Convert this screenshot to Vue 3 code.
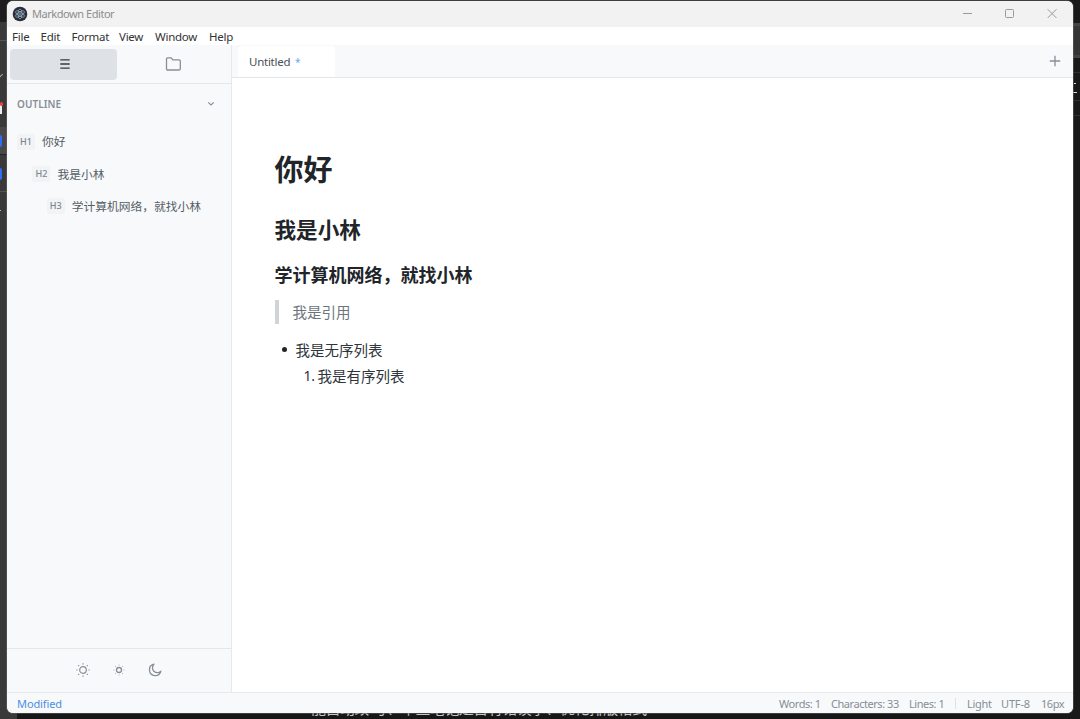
<script setup>
const menus = [
  { label: 'File', w: 28.5 }, { label: 'Edit', w: 31 }, { label: 'Format', w: 47.5 },
  { label: 'View', w: 36 }, { label: 'Window', w: 54 }, { label: 'Help', w: 30 },
]
const outline = [
  { level: 1, text: '你好' },
  { level: 2, text: '我是小林' },
  { level: 3, text: '学计算机网络，就找小林' },
]
const rays = [0, 45, 90, 135, 180, 225, 270, 315]
</script>

<template>
  <div class="desktop">
    <div class="back left">
      <i class="line a"></i><i class="tick"></i><i class="doc"></i><i class="red"></i><i class="selected"></i>
      <i class="blue one"></i><i class="blue two"></i><i class="line b"></i><i class="dash"></i>
    </div>
    <div class="back right"><i class="band"></i><i class="mark m1"></i><i class="mark m2"></i><i class="rule r1"></i><i class="rule r2"></i><i class="rule r3"></i></div>
    <div class="behind">能自动改 写、单三笔记是否有错误字、优化排版格式</div>
    <div class="window">
      <header class="titlebar">
        <svg class="logo" width="16" height="16" viewBox="0 0 16 16" fill="none">
          <circle cx="8" cy="8" r="7.3" fill="#2b2e3a" />
          <g stroke="#8fafbd" stroke-width=".75">
            <ellipse cx="8" cy="8" rx="5" ry="2" transform="rotate(30 8 8)" />
            <ellipse cx="8" cy="8" rx="5" ry="2" transform="rotate(90 8 8)" />
            <ellipse cx="8" cy="8" rx="5" ry="2" transform="rotate(150 8 8)" />
          </g>
          <circle cx="8" cy="8" r=".8" fill="#a6c5d0" />
        </svg>
        <span class="title">Markdown Editor</span>
        <svg class="controls" width="96" height="12" viewBox="0 0 96 12" fill="none" stroke="#9a9a9a">
          <path d="M1 5.5h9" />
          <rect x="43.5" y="1.5" width="8" height="8" rx="1" />
          <path d="m85.7 1.2 8.8 8.8m0-8.8-8.8 8.8" />
        </svg>
      </header>
      <nav class="menu">
        <span v-for="m in menus" :key="m.label" :style="{ width: m.w + 'px' }">{{ m.label }}</span>
      </nav>
      <div class="body">
        <aside>
          <div class="modes">
            <div class="mode active">
              <svg width="12" height="12" viewBox="0 0 12 12" stroke="#343a40" stroke-width="1.3"><path d="M1.3 1.8h9.4M1.3 6h9.4M1.3 10.2h9.4" /></svg>
            </div>
            <div class="mode">
              <svg width="17" height="16" viewBox="0 0 17 16" fill="none" stroke="#868e96" stroke-width="1.3" stroke-linejoin="round"><path d="M2.7 1.8h3.5l1.7 2.1h6.2q1.2 0 1.2 1.2v7.6q0 1.3-1.3 1.3H2.8q-1.3 0-1.3-1.3V3q0-1.2 1.2-1.2Z" /></svg>
            </div>
          </div>
          <div class="outline-head"><span>OUTLINE</span>
            <svg width="8" height="6" viewBox="0 0 8 6" fill="none" stroke="#868e96" stroke-width="1.1"><path d="m1.2 1.3 2.8 2.7 2.8-2.7" /></svg>
          </div>
          <div class="tree">
            <div v-for="o in outline" :key="o.level" class="node" :class="'lv' + o.level">
              <b>H{{ o.level }}</b><span>{{ o.text }}</span>
            </div>
          </div>
          <div class="themes">
            <svg width="16" height="16" viewBox="0 0 16 16" fill="none" stroke="#868e96" stroke-width="1.2">
              <circle cx="8" cy="8" r="3.3" />
              <path v-for="r in rays" :key="r" d="M8 1.3v1.2" :transform="`rotate(${r} 8 8)`" />
            </svg>
            <svg width="16" height="16" viewBox="0 0 16 16" fill="none" stroke="#868e96" stroke-width="1.3">
              <circle cx="8" cy="8" r="2.5" />
              <path v-for="r in rays" :key="r" d="M8 2.5v1" stroke="#adb5bd" stroke-width="1" :transform="`rotate(${r} 8 8)`" />
            </svg>
            <svg width="16" height="16" viewBox="0 0 16 16" fill="none" stroke="#868e96" stroke-width="1.3" stroke-linejoin="round">
              <path d="M6.9 2.2A5.8 5.8 0 1 0 13.9 9.2 4.7 4.7 0 0 1 6.9 2.2Z" />
            </svg>
          </div>
        </aside>
        <main>
          <div class="tabs">
            <div class="tab"><span class="name">Untitled</span><span class="star">*</span></div>
            <svg class="plus" width="12" height="12" viewBox="0 0 12 12" stroke="#868e96" stroke-width="1.3"><path d="M6 .8v10.4M.8 6h10.4" /></svg>
          </div>
          <article>
            <h1>你好</h1>
            <h2>我是小林</h2>
            <h3>学计算机网络，就找小林</h3>
            <blockquote>我是引用</blockquote>
            <div class="item"><i class="bullet"></i>我是无序列表</div>
            <div class="item nested"><span class="num">1.</span>我是有序列表</div>
          </article>
        </main>
      </div>
      <footer>
        <span class="modified">Modified</span>
        <span class="words">Words: 1</span>
        <span class="chars">Characters: 33</span>
        <span class="lines">Lines: 1</span>
        <i></i>
        <span class="light">Light</span>
        <span class="utf">UTF-8</span>
        <span class="px">16px</span>
      </footer>
    </div>
  </div>
</template>

<style>
body { margin: 0; overflow: hidden; }
</style>
<style scoped>
* { box-sizing: border-box; }
svg { display: block; flex: none; }
.desktop { position: relative; width: 1080px; height: 719px; padding: 1px 7px 6px; background: #171717; overflow: hidden; font-family: "Noto Sans", "Noto Sans CJK SC", sans-serif; }
.back { position: absolute; top: 0; bottom: 0; overflow: hidden; }
.back i { position: absolute; display: block; }
.left { left: 0; width: 17px; background: linear-gradient(#1d1d1d 22px, #393939 22px); }
.right { right: 0; width: 10px; background: #191919; }
.line { left: 0; width: 7px; height: 1px; background: #555; }
.line.a { top: 40px; } .line.b { top: 191px; }
.tick { left: -3px; top: 72px; width: 5px; height: 5px; border-right: 1px solid #aaa; border-bottom: 1px solid #aaa; transform: rotate(45deg); }
.doc { left: 0; top: 104px; width: 2px; height: 10px; background: #eee; }
.red { left: 0; top: 102px; width: 3px; height: 4px; background: #e94343; border-radius: 2px; }
.selected { left: 0; top: 127px; width: 7px; height: 28px; background: #484848; border-bottom: 1px solid #222; }
.blue { left: 0; width: 2px; height: 12px; background: #316cf4; border-radius: 0 2px 2px 0; }
.one { top: 135px; } .two { top: 168px; }
.dash { left: 0; top: 210px; width: 1px; height: 1px; background: #bbb; }
.band { left: 0; top: 23px; width: 10px; height: 35px; background: #353535; border-top: 3px solid #444; border-bottom: 3px solid #444; }
.mark { right: 3px; background: #ddd; }
.m1 { top: 83px; width: 2px; right: 4px; height: 1px; } .m2 { top: 92px; width: 4px; height: 1px; }
.rule { left: 0; width: 10px; height: 1px; background: #303030; }
.r1 { top: 72px; } .r2 { top: 100px; } .r3 { top: 115px; }
.behind { position: absolute; left: 311px; top: 699px; height: 19px; line-height: 19px; color: #c7c7c7; font-size: 15px; letter-spacing: -.55px; white-space: nowrap; }
.window { position: relative; width: 1066px; height: 712px; border-radius: 6px; overflow: hidden; background: #fff; display: flex; flex-direction: column; box-shadow: 0 0 0 1px #68686880; }
.titlebar { height: 26px; flex: none; background: #f2f2f2; display: flex; align-items: center; padding: 0 15px 1px 5px; }
.title { margin-left: 4px; font-size: 11px; color: #8d8d8d; letter-spacing: -.45px; white-space: nowrap; }
.controls { margin-left: auto; }
.menu { height: 18px; flex: none; display: flex; padding-left: 5px; font-size: 11.5px; line-height: 20px; color: #333; letter-spacing: -.25px; white-space: nowrap; }
.menu span { flex: none; }
.body { display: flex; flex: 1; min-height: 0; }
aside { width: 225px; flex: none; display: flex; flex-direction: column; background: #f8f9fb; border-right: 1px solid #e6eaee; }
.modes { height: 39px; display: flex; padding: 4px 3px 3px; border-bottom: 1px solid #e3e7ea; gap: 3px; }
.mode { width: 106.5px; height: 31px; border-radius: 4px; display: flex; align-items: center; justify-content: center; padding: 0 0 1px 3px; }
.mode + .mode { padding-left: 2px; }
.active { background: #dee2e6; }
.outline-head { height: 40px; display: flex; align-items: center; justify-content: space-between; padding: 0 16px 0 10px; font-size: 10px; font-weight: 600; color: #868e96; letter-spacing: .06px; }
.tree { flex: 1; padding-top: 1.5px; }
.node { height: 32.3px; display: flex; align-items: center; font-size: 11.75px; color: #565d64; }
.node span { margin-top: -1.5px; }
.node b { width: 18px; height: 16px; flex: none; border-radius: 2px; background: #f1f3f5; font-size: 9px; line-height: 16px; text-align: center; font-weight: 500; color: #7b858e; margin-right: 7px; }
.lv1 { padding-left: 10px; } .lv2 { padding-left: 25.4px; } .lv3 { padding-left: 39.8px; }
.themes { height: 44px; display: flex; align-items: center; justify-content: center; gap: 20px; padding: 0 1px 1px 0; border-top: 1px solid #e3e7ea; }
main { flex: 1; }
.tabs { height: 33px; background: #f8f9fb; border-bottom: 1px solid #e3e7ea; padding: 1px 12.5px 0 6px; display: flex; align-items: center; justify-content: space-between; }
.plus { margin-bottom: 2px; }
.tab { width: 97px; height: 31px; background: #fff; border-radius: 4px 4px 0 0; padding-left: 11px; font-size: 11.5px; line-height: 32px; color: #495057; display: flex; }
.name { width: 46px; letter-spacing: -.26px; }
.star { color: #74a8e8; font-size: 10px; }
article { padding: 68px 42px 0 42.5px; color: #212529; }
h1, h2, h3, blockquote { margin: 0; }
h1 { font-size: 29px; line-height: 48px; }
h2 { font-size: 21.6px; line-height: 36px; margin-top: 17.5px; }
h3 { font-size: 18px; line-height: 30px; margin-top: 12.5px; }
blockquote { margin-top: 10px; height: 24px; line-height: 24px; padding-left: 14px; border-left: 4px solid #ced4da; font-size: 14.5px; color: #6c757d; }
.item { display: flex; align-items: center; height: 26.5px; font-size: 14.5px; color: #30353a; }
.item:nth-of-type(1) { margin-top: 12px; }
.bullet { width: 5px; height: 5px; border-radius: 50%; background: #212529; margin: 1px 9px 0 7px; }
.nested { padding-left: 29px; }
.num { width: 14px; font-size: 14px; letter-spacing: -.3px; }
footer { height: 21px; flex: none; display: flex; align-items: center; border-top: 1px solid #e6eaee; background: #f8f9fb; padding: 1px 0 0 10px; font-size: 11px; line-height: 18px; color: #868e96; white-space: nowrap; letter-spacing: -.45px; }
footer span { flex: none; }
.modified { width: 762px; color: #4a90e2; letter-spacing: -.1px; }
.words { width: 52px; } .chars { width: 78px; } .lines { width: 46px; }
footer i { width: 1px; height: 11px; background: #dee2e6; margin-right: 11px; }
.light { width: 34px; letter-spacing: -.3px; } .utf { width: 40px; letter-spacing: -.15px; }
</style>
